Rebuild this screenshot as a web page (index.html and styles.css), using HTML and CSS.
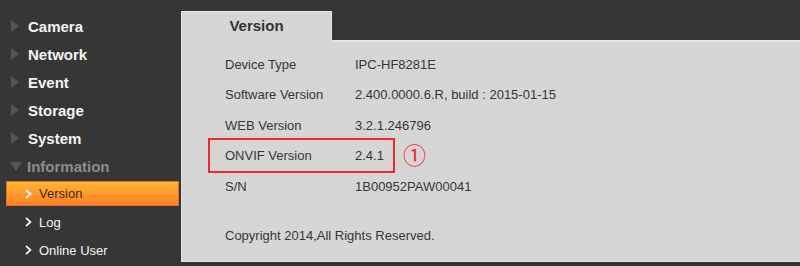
FILE: index.html
```html
<!DOCTYPE html>
<html lang="en">
<head>
    <meta charset="UTF-8">
    <title>Version</title>
    <link rel="stylesheet" href="styles.css">
</head>
<body>
    <div class="sidebar">
        <div class="menu-item"><span class="arrow-right"></span>Camera</div>
        <div class="menu-item"><span class="arrow-right"></span>Network</div>
        <div class="menu-item"><span class="arrow-right"></span>Event</div>
        <div class="menu-item"><span class="arrow-right"></span>Storage</div>
        <div class="menu-item"><span class="arrow-right"></span>System</div>
        <div class="menu-item open"><span class="arrow-down"></span>Information</div>
        <div class="sub-item active">
            <svg class="chevron" width="7" height="10" viewBox="0 0 7 10"><polyline points="1,1 5.5,5 1,9"/></svg>Version
        </div>
        <div class="sub-item">
            <svg class="chevron" width="7" height="10" viewBox="0 0 7 10"><polyline points="1,1 5.5,5 1,9"/></svg>Log
        </div>
        <div class="sub-item">
            <svg class="chevron" width="7" height="10" viewBox="0 0 7 10"><polyline points="1,1 5.5,5 1,9"/></svg>Online User
        </div>
    </div>

    <div class="main">
        <div class="tab-row">
            <div class="tab">Version</div>
        </div>
        <div class="panel">
            <div class="info-row"><span class="label">Device Type</span><span>IPC-HF8281E</span></div>
            <div class="info-row"><span class="label">Software Version</span><span>2.400.0000.6.R, build : 2015-01-15</span></div>
            <div class="info-row"><span class="label">WEB Version</span><span>3.2.1.246796</span></div>
            <div class="info-row">
                <div class="marked"><span class="label">ONVIF Version</span><span>2.4.1</span></div>
                <span class="note">①</span>
            </div>
            <div class="info-row"><span class="label">S/N</span><span>1B00952PAW00041</span></div>
            <div class="info-row copyright">Copyright 2014,All Rights Reserved.</div>
        </div>
    </div>
</body>
</html>
```

FILE: styles.css
```css
* {
    margin: 0;
    padding: 0;
    box-sizing: border-box;
    font-family: "Liberation Sans", Arial, sans-serif;
}

body {
    background-color: #363636;
    height: 266px;
    display: flex;
    overflow: hidden;
}

.sidebar {
    width: 181px;
    padding-top: 12px;
}

.menu-item {
    height: 28px;
    display: flex;
    align-items: center;
    color: #f4f4f4;
    font-size: 15px;
    font-weight: bold;
}

.menu-item.open {
    color: #8c8c8c;
}

.arrow-right {
    width: 0;
    height: 0;
    border-top: 6px solid transparent;
    border-bottom: 6px solid transparent;
    border-left: 8px solid #555;
    margin: 0 9px 0 11px;
}

.arrow-down {
    width: 0;
    height: 0;
    border-left: 6px solid transparent;
    border-right: 6px solid transparent;
    border-top: 9px solid #555;
    margin: 1px 5px 0 10px;
}

.sub-item {
    height: 28px;
    display: flex;
    align-items: center;
    color: #f4f4f4;
    font-size: 13px;
    padding-left: 25px;
}

.sub-item.active {
    height: 25px;
    margin: 1px 2px 2px 6px;
    padding-left: 18px;
    color: #3b2a1a;
    background: linear-gradient(#ffb534, #ff7f26);
    border: 1px solid #e07020;
}

.chevron {
    margin-right: 7px;
    fill: none;
    stroke: #f4f4f4;
    stroke-width: 1.7;
}

.sub-item.active .chevron {
    stroke: #fff;
}

.main {
    flex: 1;
    display: flex;
    flex-direction: column;
    padding-top: 11px;
    padding-bottom: 4px;
}

.tab-row {
    height: 29px;
    display: flex;
}

.tab {
    width: 151px;
    background-color: #d6d6d6;
    border-top: 1px solid #e8e8e8;
    border-left: 1px solid #e0e0e0;
    border-right: 1px solid #e8e8e8;
    color: #333;
    font-size: 15px;
    font-weight: bold;
    text-align: center;
    padding-top: 5px;
}

.panel {
    flex: 1;
    background-color: #d6d6d6;
    border-left: 1px solid #e0e0e0;
    border-bottom: 1px solid #e4e4e4;
    padding: 9px 0 0 28px;
    position: relative;
}

.panel::before {
    content: '';
    position: absolute;
    top: 0;
    left: 151px;
    right: 0;
    height: 2px;
    background-color: #e4e4e4;
}

.info-row {
    height: 30.5px;
    display: flex;
    align-items: center;
    font-size: 13px;
    color: #363636;
    padding-left: 15px;
}

.label {
    width: 130px;
}

.marked {
    display: flex;
    align-items: center;
    width: 187px;
    height: 35px;
    margin-left: -17px;
    padding-left: 15px;
    border: 2px solid #ee2a2e;
}

.note {
    color: #ee2a2e;
    font-family: "Noto Sans CJK SC", sans-serif;
    font-size: 23px;
    margin: -4px 0 0 8px;
}

.copyright {
    margin-top: 19px;
}
```
